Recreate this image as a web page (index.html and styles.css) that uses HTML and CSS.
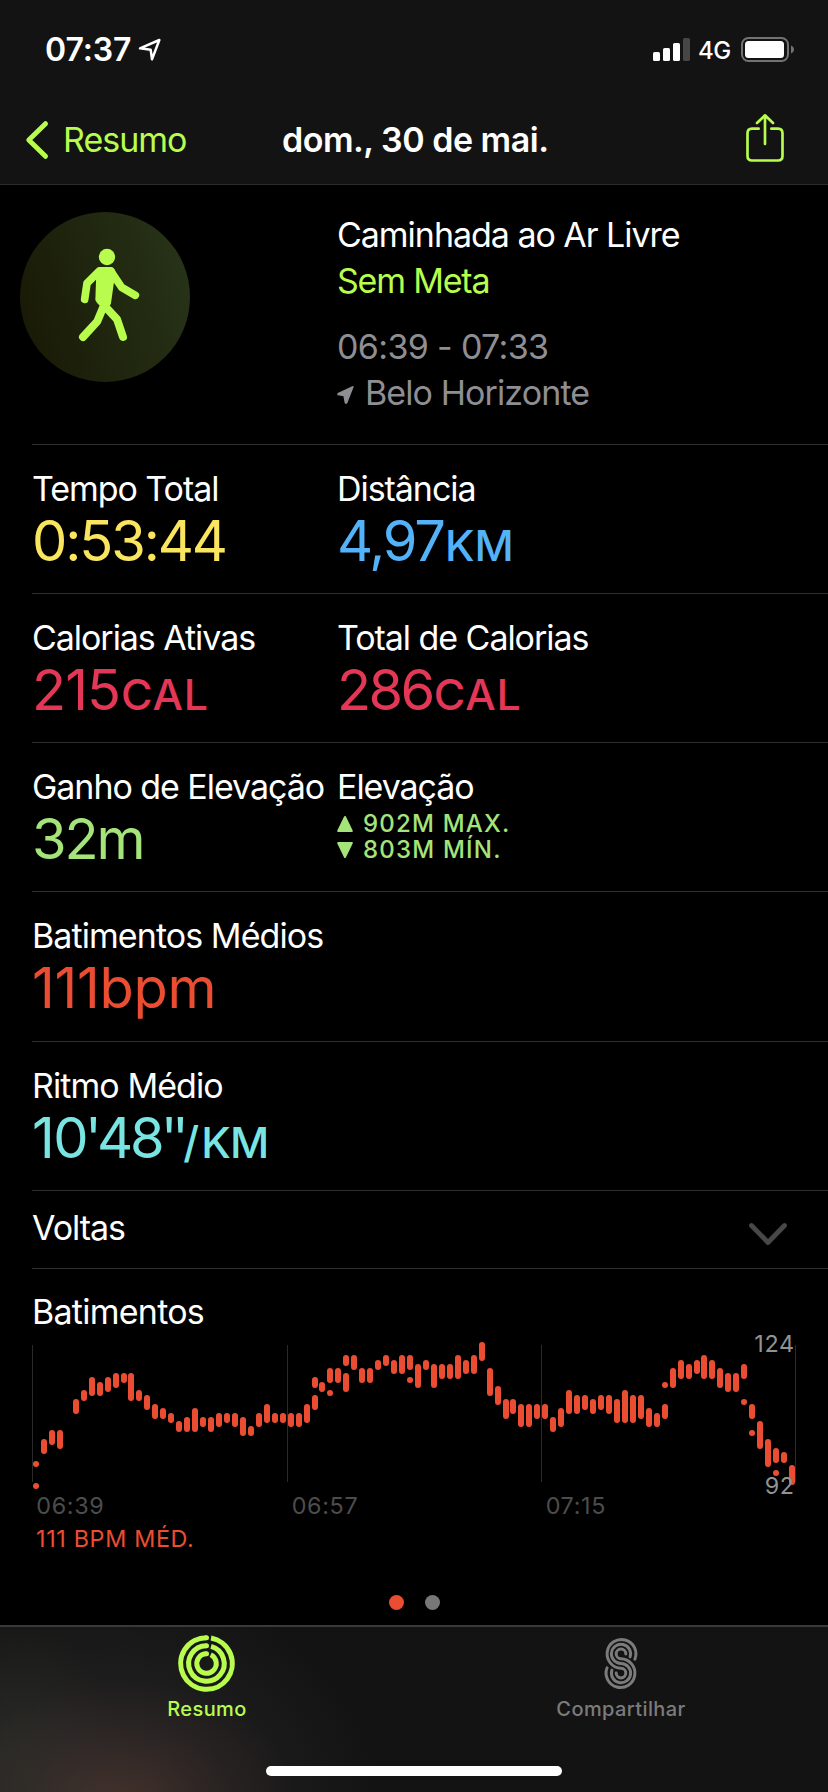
FILE: index.html
```html
<!DOCTYPE html>
<html lang="pt-BR">
<head>
<meta charset="utf-8">
<title>dom., 30 de mai.</title>
<link rel="stylesheet" href="styles.css">
</head>
<body>
<div class="screen">
  <header class="top">
    <div class="status">
      <span class="clock">07:37</span>
      <svg class="loc" viewBox="0 0 66 66"><path d="M3 28 61 3 39 61 35 32Z" fill="none" stroke="#fff" stroke-width="7.500" stroke-linejoin="round"/></svg>
      <svg class="signal" viewBox="0 0 37 23"><g fill="#fff"><rect y="14" width="7" height="9" rx="1.6"/><rect x="10" y="10" width="7" height="13" rx="1.6"/><rect x="20" y="5" width="7" height="18" rx="1.6"/></g><rect x="30" width="7" height="23" rx="1.6" fill="#464646"/></svg>
      <span class="net">4G</span>
      <svg class="battery" viewBox="0 0 53 25"><rect x="1" y="1" width="46" height="23" rx="6.5" fill="none" stroke="#727272" stroke-width="2"/><rect x="4" y="4" width="39" height="17" rx="3.5" fill="#fff"/><path d="M50 8.5c4 1.5 4 6.5 0 8Z" fill="#727272"/></svg>
    </div>
    <nav class="nav">
      <svg class="back" viewBox="0 0 22 38"><path d="M19.5 2.700 2.800 19l16.700 16.300" fill="none" stroke="#b8fc4e" stroke-width="5" stroke-linecap="round" stroke-linejoin="round"/></svg>
      <span class="back-label">Resumo</span>
      <h1 class="title">dom., 30 de mai.</h1>
      <svg class="share" viewBox="0 0 114 144"><path d="M38 44H18Q4.500 44 4.500 58V126Q4.500 139.500 18 139.500H96Q109.500 139.500 109.500 126V58Q109.500 44 96 44H76M57 90V5M33 27 57 4 81 27" fill="none" stroke="#b8fc4e" stroke-width="8" stroke-linecap="round" stroke-linejoin="round"/></svg>
    </nav>
  </header>

  <main>
    <section class="summary">
      <svg class="walk" viewBox="60 66 510 510">
        <defs><linearGradient id="disc" x1="0" y1=".65" x2="1" y2=".35"><stop offset="0" stop-color="#191a06"/><stop offset="1" stop-color="#273318"/></linearGradient></defs>
        <circle cx="315" cy="321" r="255" fill="url(#disc)"/>
        <g fill="#b8fc4e" stroke="#b8fc4e" stroke-linecap="round" stroke-linejoin="round">
          <circle cx="321" cy="201" r="24.500" stroke="none"/>
          <path d="M297 231H329Q346 231 346 248L333 340Q331 350 317 352Q296 352 286 330L289 245Z" stroke="none"/>
          <path d="M298 243 261 280 254 328M332 243 365 292 406 316" fill="none" stroke-width="23"/>
          <path d="M312 346 292 394 249 441M314 348 351 388 369 441" fill="none" stroke-width="24"/>
        </g>
      </svg>
      <div class="info">
        <p class="name">Caminhada ao Ar Livre</p>
        <p class="goal">Sem Meta</p>
        <p class="time">06:39 - 07:33</p>
        <p class="place"><svg class="pin" viewBox="0 0 51 54"><path d="M3 23 48 2 29 51H25L21 29 3 26Z" fill="#8e8e93" stroke="#8e8e93" stroke-width="4" stroke-linejoin="round"/></svg><span class="city">Belo Horizonte</span></p>
      </div>
    </section>

    <section class="row">
      <div class="metric"><p class="label">Tempo Total</p><p class="value yellow v-time">0:53:44</p></div>
      <div class="metric"><p class="label">Distância</p><p class="value blue v-dist">4,97<span class="unit">KM</span></p></div>
    </section>
    <section class="row">
      <div class="metric"><p class="label">Calorias Ativas</p><p class="value pink v-cal">215<span class="unit">CAL</span></p></div>
      <div class="metric"><p class="label">Total de Calorias</p><p class="value pink v-total">286<span class="unit">CAL</span></p></div>
    </section>
    <section class="row">
      <div class="metric"><p class="label">Ganho de Elevação</p><p class="value green v-gain">32m</p></div>
      <div class="metric"><p class="label">Elevação</p>
        <div class="levels green">
          <p class="level"><svg class="tri" viewBox="0 0 16 18"><path d="M8 2 14.800 16H1.200Z" fill="#a5e47b" stroke="#a5e47b" stroke-width="2" stroke-linejoin="round"/></svg><span>902M MAX.</span></p>
          <p class="level"><svg class="tri" viewBox="0 0 16 18"><path d="M8 16 14.800 2H1.200Z" fill="#a5e47b" stroke="#a5e47b" stroke-width="2" stroke-linejoin="round"/></svg><span>803M MÍN.</span></p>
        </div>
      </div>
    </section>
    <section class="row tall">
      <div class="metric"><p class="label wide">Batimentos Médios</p><p class="value red v-bpm">111bpm</p></div>
    </section>
    <section class="row">
      <div class="metric"><p class="label wide">Ritmo Médio</p><p class="value cyan v-pace">10<span class="mark">'</span><span class="sec">48</span><span class="marks">''</span><span class="unit"><span class="slash">/</span>KM</span></p></div>
    </section>
    <section class="laps">
      <p class="label">Voltas</p>
      <svg class="chev" viewBox="0 0 38 23"><path d="M2.500 2.500 19 19.500 35.500 2.500" fill="none" stroke="#48484a" stroke-width="4.800" stroke-linecap="round" stroke-linejoin="round"/></svg>
    </section>

    <section class="heart">
      <p class="label heart-title">Batimentos</p>
      <svg class="chart" viewBox="0 39 2484 669">
        <path class="grid" d="M97.500 75V486M862.500 75V486M1624.500 75V486M2386.500 75V486"/>
        <path class="bars" d="M108 432h.1M108 498h.1M132 366V393M156 339V366M180 339V378M228 246V273M252 219V234M276 180V219M300 195V219M324 180V207M348 168V195M372 168V180M393 168V234M417 219V234M441 234V261M465 261V288M489 273V288M513 288V300M537 312V327M561 300V327M585 273V327M609 300V312M633 300V327M657 288V312M681 288V300M705 288V312M729 300V339M753 327V339M777 288V312M801 261V300M825 288V300M849 288V300
        M873 288V312M897 288V312M921 261V300M945 180V195M945 234V261M966 195V207M990 153V180M990 219h.1M1014 153V180M1038 114V129M1038 168V207M1062 114V141M1086 153V180M1110 153V180M1134 129V141M1158 114V129M1182 129V153M1206 114V153M1230 114V141M1230 180h.1M1254 141V195M1278 129V141M1302 141V195M1326 141V168M1350 141V168M1374 114V168M1398 129V153M1422 114V153M1446 75V114M1470 153V219M1494 207V246M1518 246V288M1539 246V273M1563 261V312M1587 261V312M1611 261V288M1635 261V288
        M1659 300V327M1683 273V312M1707 219V273M1731 234V273M1755 234V261M1779 246V273M1803 234V261M1827 234V273M1851 246V300M1875 219V300M1899 234V300M1923 234V288M1947 273V312M1971 288V312M1995 195h.1M1995 261V288M2019 153V195M2043 129V168M2067 141V168M2091 129V153M2112 114V168M2136 129V168M2160 153V195M2184 168V207M2208 168V207M2232 141V168M2232 246h.1M2256 261V288M2256 339h.1M2280 312V378M2304 366V432M2328 393V420M2328 459h.1M2352 405V420M2376 444V486"/>
        <text class="tick" x="109" y="582">06:39</text>
        <text class="tick" x="875" y="582">06:57</text>
        <text class="tick" x="1637" y="582">07:15</text>
        <text class="limit" x="2384" y="96">124</text>
        <text class="limit" x="2384" y="522">92</text>
        <text class="avg" x="108" y="681">111 BPM MÉD.</text>
      </svg>
      <div class="dots"><i class="dot on"></i><i class="dot"></i></div>
    </section>
  </main>

  <footer class="tabs">
    <div class="tab-row">
      <div class="tab active">
        <svg class="rings" viewBox="0 0 170 170">
          <g fill="none" stroke="#b8fc4e" stroke-width="15">
            <path d="M98.500 9.200A77 77 0 1 1 85 8"/><path d="M98.500 33.800A53 53 0 1 1 85 32"/><path d="M97.500 58.800A29 29 0 1 1 85 56"/>
          </g>
          <g fill="#b8fc4e"><circle cx="85" cy="8" r="7.500"/><circle cx="85" cy="32" r="7.500"/><circle cx="85" cy="56" r="7.500"/></g>
        </svg>
        <span class="tab-label">Resumo</span>
      </div>
      <div class="tab">
        <svg class="strand" viewBox="0 0 96 154"><path d="M90 64A43.500 43.500 0 1 0 48 91.500A14.500 14.500 0 1 1 33.500 106M75.500 57A29 29 0 1 0 48 77A29 29 0 1 1 20.500 97M62.500 48A14.500 14.500 0 1 0 48 62.500A43.500 43.500 0 1 1 6 90" fill="none" stroke="#7b7b7b" stroke-width="9" stroke-linecap="round"/></svg>
        <span class="tab-label share-label">Compartilhar</span>
      </div>
    </div>
    <div class="home"></div>
  </footer>
</div>
</body>
</html>
```
FILE: styles.css
```css
* { box-sizing: border-box; }
body { margin: 0; background: #000; }
p, h1 { margin: 0; font-weight: 400; }
svg { display: block; flex: none; overflow: visible; }

.screen {
  width: 828px;
  height: 1792px;
  display: flex;
  flex-direction: column;
  overflow: hidden;
  background: #000;
  color: #fff;
  font-family: Inter, "Liberation Sans", sans-serif;
  font-size: 34px;
  white-space: nowrap;
}
main { flex: 1; }

.top { height: 185px; background: #131313; border-bottom: 1px solid #2c2c2c; }
.status { height: 96px; display: flex; align-items: flex-start; padding: 30px 34px 0 45px; }
.clock { font-size: 32px; font-weight: 600; line-height: 40px; width: 94px; letter-spacing: -0.1px; }
.loc { width: 22px; height: 22px; margin-top: 9px; }
.signal { width: 37px; height: 23px; margin: 8px 8px 0 auto; }
.net { font-size: 24px; font-weight: 500; line-height: 40px; width: 43px; margin-top: 1px; letter-spacing: -0.5px; }
.battery { width: 53px; height: 25px; margin-top: 7px; }

.nav { height: 88px; display: grid; grid-template-columns: 37px 219px 1fr 38px; align-items: start; padding: 0 44px 0 26px; }
.back { width: 22px; height: 38px; margin-top: 25px; }
.back-label { color: #b8fc4e; line-height: 46px; margin-top: 21px; letter-spacing: -1px; }
.title { font-size: 34px; font-weight: 600; line-height: 46px; margin-top: 21px; letter-spacing: -0.5px; }
.share { width: 38px; height: 48px; margin-top: 18px; }

.summary { height: 260px; display: grid; grid-template-columns: 317px 1fr; padding: 27px 0 0 20px; }
.walk { width: 170px; height: 170px; }
.info { line-height: 46px; letter-spacing: -1.03px; }
.goal { color: #b8fc4e; letter-spacing: -1.2px; }
.time { color: #8e8e93; margin-top: 20px; letter-spacing: -0.65px; }
.place { color: #8e8e93; display: flex; align-items: center; gap: 11px; letter-spacing: -0.9px; }
.pin { width: 17px; height: 18px; margin-top: 4px; }

.row { height: 149px; margin-left: 32px; padding-top: 23px; display: grid; grid-template-columns: 305px 1fr; border-top: 1px solid #303032; }
.summary + .row { margin-top: -1px; }
.tall { height: 150px; }
.label { line-height: 42px; letter-spacing: -1.05px; }
.label.wide { letter-spacing: -0.93px; }
.label.heart-title { letter-spacing: -0.75px; }
.value { font-size: 56px; line-height: 60px; letter-spacing: -2.1px; padding-top: 1px; }
.v-cal { letter-spacing: -1px; }
.v-total { letter-spacing: -2.6px; }
.v-bpm { letter-spacing: -0.3px; }
.v-pace { letter-spacing: -1.500px; }
.mark { letter-spacing: -5px; margin-left: -2px; }
.sec { letter-spacing: -3px; }
.marks { letter-spacing: -5.500px; margin-left: -1px; }
.unit { font-size: 43px; font-weight: 500; letter-spacing: 0; margin-left: 1px; }
.v-cal .unit, .v-total .unit { letter-spacing: 0.8px; }
.v-pace .unit { letter-spacing: -0.8px; margin-left: 0; }
.v-pace .slash { letter-spacing: 2px; }
.yellow { color: #fae55f; }
.blue { color: #53b2f8; }
.pink { color: #e43655; }
.green { color: #a5e47b; }
.red { color: #eb4d32; }
.cyan { color: #78e5e3; }
.levels { margin-top: 3px; font-size: 24px; font-weight: 500; line-height: 26px; letter-spacing: 1.200px; }
.level { display: flex; align-items: center; gap: 10px; font-weight: 500; }
.tri { width: 16px; height: 18px; }

.laps { height: 78px; margin-left: 32px; padding: 16px 41px 0 0; display: flex; justify-content: space-between; border-top: 1px solid #303032; }
.chev { width: 38px; height: 23px; margin-top: 16px; }
.heart { border-top: 1px solid #303032; margin-left: 32px; padding-top: 22px; }
.chart { width: 828px; height: 223px; margin-left: -32px; }
.grid { fill: none; stroke: #2a2a2a; stroke-width: 3px; }
.bars { fill: none; stroke: #eb4d32; stroke-width: 18px; stroke-linecap: round; }
.tick, .limit, .avg { font-size: 70px; letter-spacing: 2px; }
.tick { fill: #4c4c4c; }
.limit { fill: #929292; text-anchor: end; }
.avg { fill: #eb4d32; }
.dots { display: flex; gap: 21px; padding: 39px 0 0 357px; }
.dot { width: 15px; height: 15px; border-radius: 50%; background: #777; }
.on { background: #eb4d32; }

.tabs {
  height: 167px;
  border-top: 2px solid #3a3a3a;
  background:
    radial-gradient(ellipse 170px 120px at 125px 175px, rgba(92, 58, 48, .5), rgba(80, 54, 48, .2) 55%, rgba(70, 50, 48, 0)),
    radial-gradient(ellipse 290px 220px at 90px 170px, rgba(62, 58, 58, .55), rgba(56, 56, 56, 0)),
    radial-gradient(ellipse 110px 150px at 0 130px, rgba(40, 48, 34, .5), rgba(40, 48, 34, 0)),
    #131313;
}
.tab-row { height: 139px; display: grid; grid-template-columns: 1fr 1fr; }
.tab { display: flex; flex-direction: column; align-items: center; color: #7b7b7b; padding-top: 8px; }
.active { color: #b8fc4e; }
.rings { width: 57px; height: 57px; margin-right: 2px; }
.strand { width: 32px; height: 51px; margin: 3px 0; }
.tab-label { font-size: 20px; font-weight: 500; line-height: 28px; margin-top: 3px; letter-spacing: .4px; }
.home { width: 296px; height: 10px; border-radius: 5px; background: #fff; margin: 0 auto; }
```
